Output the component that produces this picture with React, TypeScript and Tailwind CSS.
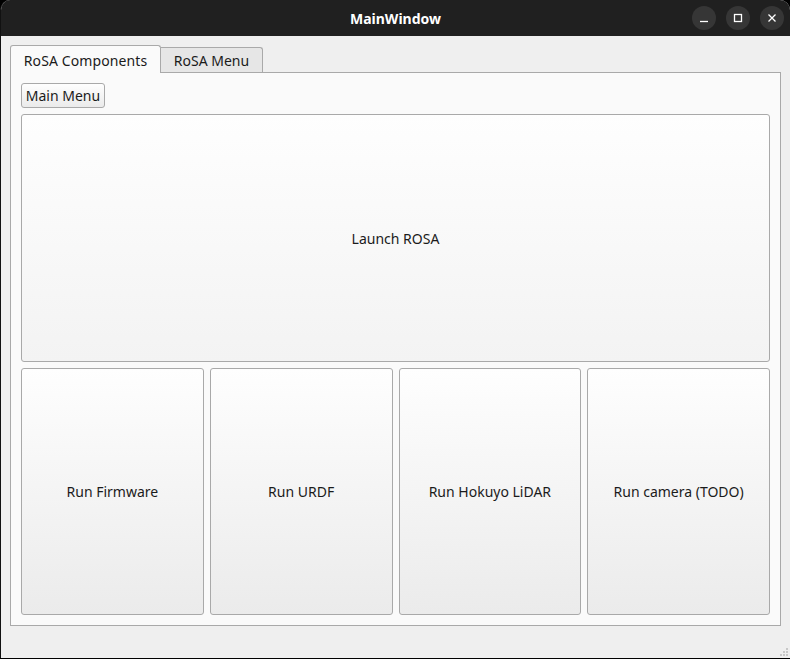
import React from "react";

const font = { fontFamily: '"Noto Sans", "Open Sans", sans-serif' };

const QtButton: React.FC<{ label: string; className?: string }> = ({
  label,
  className = "",
}) => (
  <button
    className={`flex items-center justify-center border border-[#a9a9a9] rounded-[3px] bg-gradient-to-b from-[#fefefe] to-[#ebebeb] text-[14px] text-[#1b1b1b] ${className}`}
  >
    {label}
  </button>
);

const WindowControl: React.FC<{ kind: "min" | "max" | "close" }> = ({ kind }) => (
  <div className="w-[24px] h-[24px] rounded-full bg-[#363636] flex items-center justify-center">
    <svg width="12" height="12" viewBox="0 0 12 12" fill="none" stroke="#ffffff" strokeWidth="1.3">
      {kind === "min" && <path d="M2 9.5 H10" />}
      {kind === "max" && <rect x="2.5" y="2.5" width="7" height="7" />}
      {kind === "close" && <path d="M2.5 2.5 L9.5 9.5 M9.5 2.5 L2.5 9.5" />}
    </svg>
  </div>
);

export default function App() {
  return (
    <div className="w-[790px] h-[659px] bg-black" style={font}>
      <div className="w-[790px] h-[658px] bg-[#efefef] rounded-t-[10px] overflow-hidden flex flex-col border-l border-[#111]">
        <div className="h-[36px] bg-[#202020] relative flex items-center justify-center shrink-0">
          <span className="text-white font-bold text-[14px]">MainWindow</span>
          <div className="absolute right-[6px] top-[6px] flex gap-[10px]">
            <WindowControl kind="min" />
            <WindowControl kind="max" />
            <WindowControl kind="close" />
          </div>
        </div>

        <div className="flex-1 relative pl-[9px] pr-[9px] pt-[9px]">
          <div className="flex items-end h-[28px] relative z-10">
            <div className="h-[28px] w-[151px] bg-[#fafafa] border border-[#a9a9a9] border-b-0 rounded-t-[3px] flex items-center justify-center text-[14px] text-[#1b1b1b] pt-[1px] tracking-[0.1px]">
              RoSA Components
            </div>
            <div className="h-[25px] w-[102px] bg-[#e6e6e6] border border-[#a9a9a9] border-l-0 border-b-0 rounded-tr-[3px] flex items-center justify-center text-[14px] text-[#1b1b1b] mb-[1px]">
              RoSA Menu
            </div>
          </div>
          <div className="w-[771px] h-[554px] -mt-[1px] bg-[#fafafa] border border-[#a9a9a9] p-[10px] flex flex-col gap-[6px]">
            <QtButton label="Main Menu" className="w-[84px] h-[25px] shrink-0" />
            <QtButton label="Launch ROSA" className="h-[248px] w-full shrink-0 to-[#f3f3f3]" />
            <div className="grid grid-cols-4 gap-[6px] flex-1">
              <QtButton label="Run Firmware" />
              <QtButton label="Run URDF" />
              <QtButton label="Run Hokuyo LiDAR" />
              <QtButton label="Run camera (TODO)" />
            </div>
          </div>
          <div className="absolute right-[2px] bottom-[2px] grid grid-cols-3 gap-[1px] w-[8px]">
            <span />
            <span />
            <span className="w-[2px] h-[2px] bg-[#c8c8c8]" />
            <span />
            <span className="w-[2px] h-[2px] bg-[#c8c8c8]" />
            <span className="w-[2px] h-[2px] bg-[#c8c8c8]" />
            <span className="w-[2px] h-[2px] bg-[#c8c8c8]" />
            <span className="w-[2px] h-[2px] bg-[#c8c8c8]" />
            <span className="w-[2px] h-[2px] bg-[#c8c8c8]" />
          </div>
        </div>
      </div>
    </div>
  );
}
